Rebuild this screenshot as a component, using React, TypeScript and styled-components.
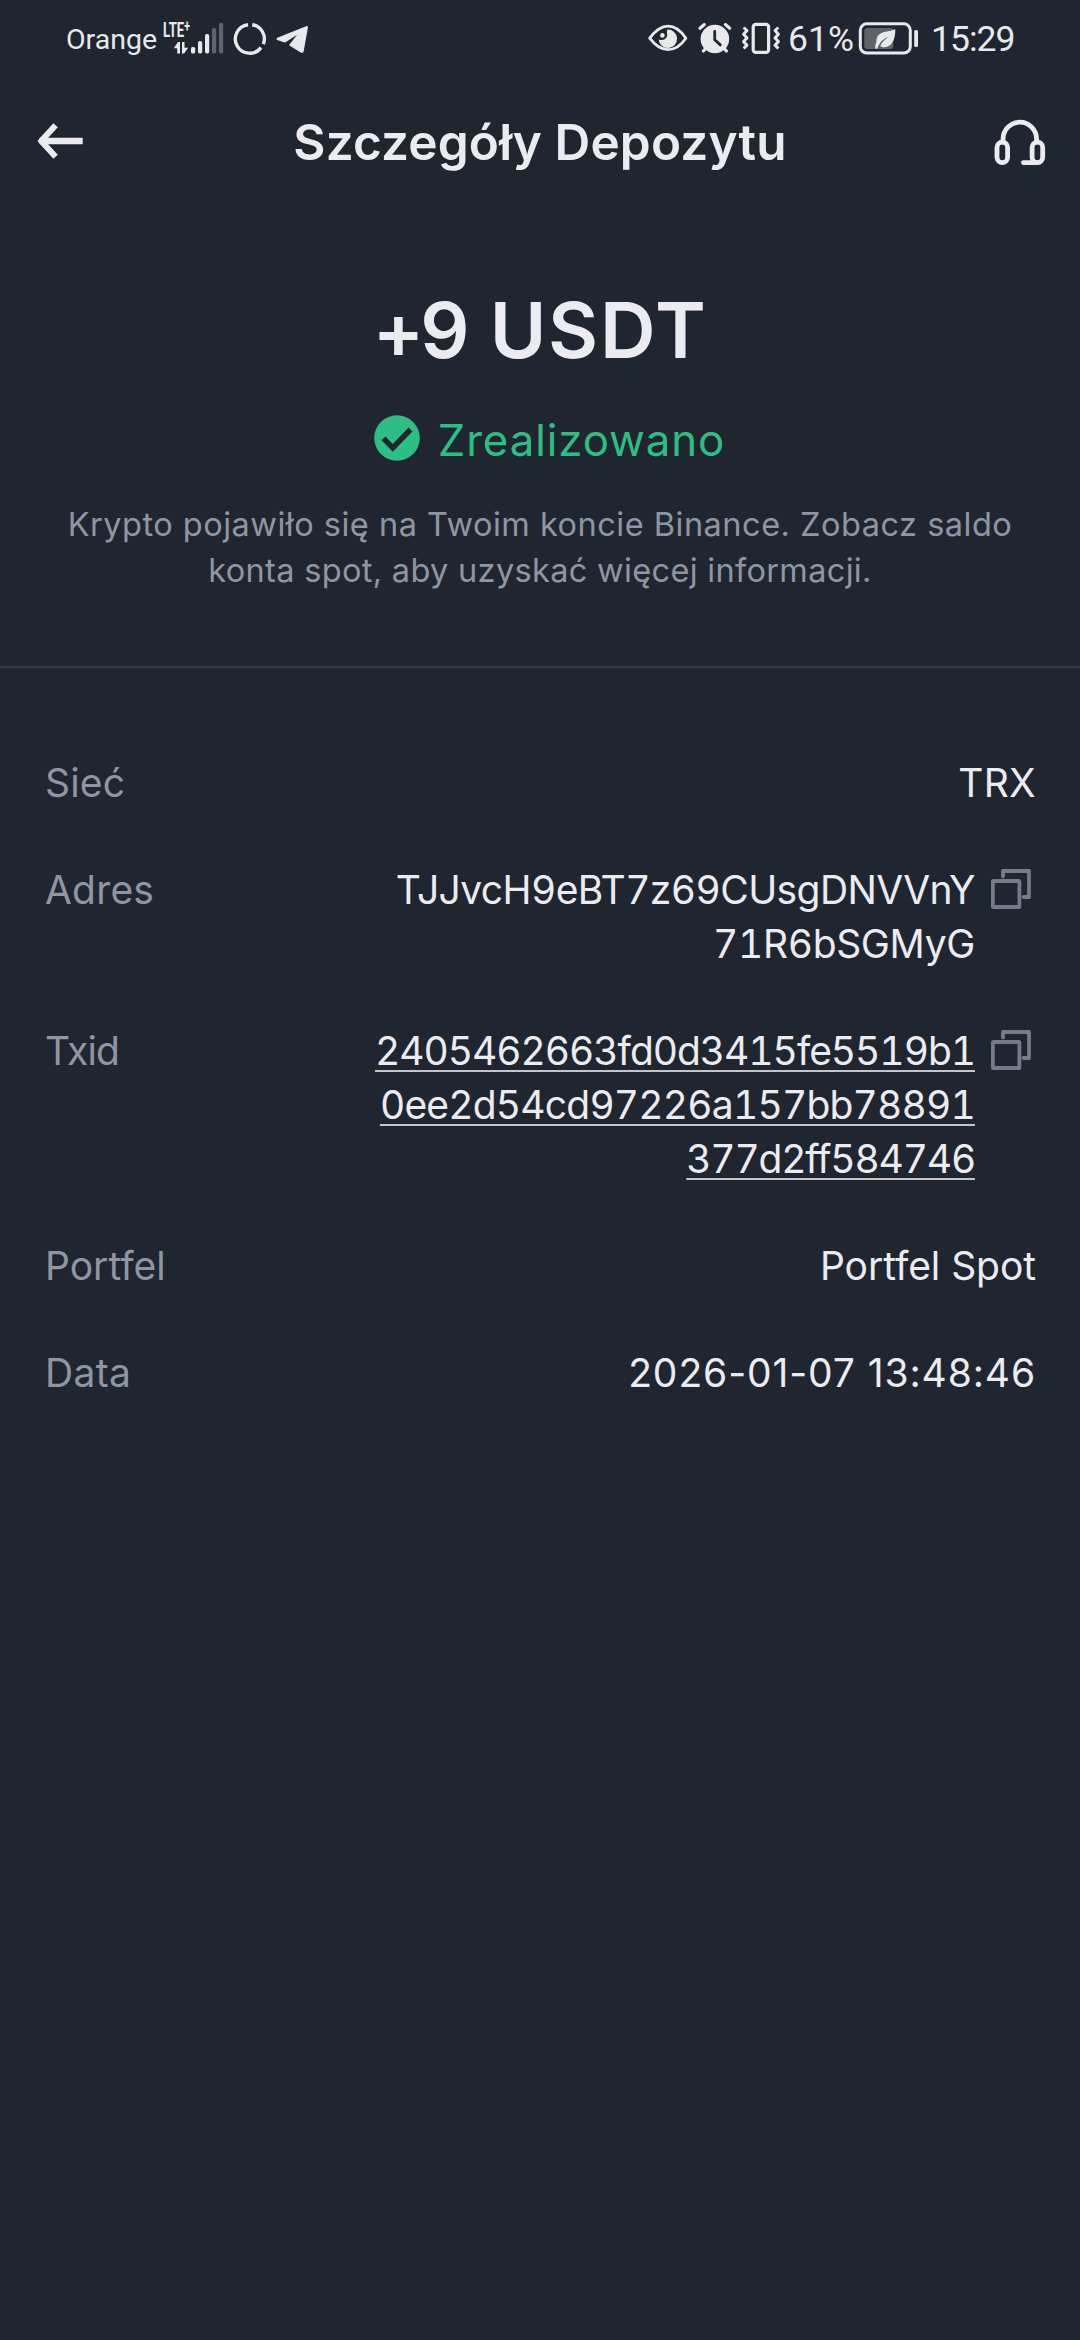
import React from 'react';
import styled, { createGlobalStyle } from 'styled-components';

const color = {
  bg: '#202630',
  text: '#ebecf0',
  muted: '#8f96a3',
  icon: '#737c8b',
  green: '#2ebd85',
  line: '#323843',
  status: '#e8e9eb',
  dim: '#5f646c',
};

const GlobalStyle = createGlobalStyle`
  html, body { margin: 0; background: ${color.bg}; }
  * { box-sizing: border-box; }
`;

const Screen = styled.main`
  display: flex;
  flex-direction: column;
  width: 1080px;
  min-height: 2340px;
  background: ${color.bg};
  color: ${color.text};
  font-family: Inter, 'Liberation Sans', sans-serif;
`;

const StatusBar = styled.div`
  display: flex;
  justify-content: space-between;
  align-items: center;
  height: 78px;
  padding: 0 65px 0 66px;
  color: ${color.status};
  font-family: Roboto, 'Liberation Sans', sans-serif;
`;

const StatusGroup = styled.div`
  display: flex;
  align-items: center;
`;

const StatusText = styled.span<{ $width: number; $size: number; $spacing?: number; $indent?: number }>`
  width: ${p => p.$width}px;
  padding-left: ${p => p.$indent ?? 0}px;
  font-size: ${p => p.$size}px;
  letter-spacing: ${p => p.$spacing ?? 0}px;
  white-space: nowrap;
`;

const Glyph = styled.svg<{ $gap?: number }>`
  display: block;
  flex: none;
  margin-left: ${p => p.$gap ?? 0}px;
  overflow: visible;
`;

const Header = styled.header`
  display: grid;
  grid-template-columns: 120px 1fr 120px;
  align-items: center;
  height: 126px;
`;

const Title = styled.h1`
  margin: 0;
  padding-top: 2px;
  font-size: 49.5px;
  font-weight: 600;
  line-height: 62px;
  letter-spacing: 0.15px;
  text-align: center;
  white-space: nowrap;
`;

const IconButton = styled.button<{ $end?: boolean }>`
  display: flex;
  justify-content: ${p => (p.$end ? 'flex-end' : 'flex-start')};
  padding: ${p => (p.$end ? '4px 34px 0 0' : '0 0 0 36px')};
  border: 0;
  background: none;
  color: inherit;
`;

const Summary = styled.section`
  display: flex;
  flex-direction: column;
  align-items: center;
  padding: 80px 40px 72px;
  border-bottom: 2px solid ${color.line};
`;

const Amount = styled.div`
  font-size: 77px;
  font-weight: 600;
  line-height: 92px;
  letter-spacing: 1.8px;
  word-spacing: 3px;
  white-space: nowrap;
`;

const Quantity = styled.span`
  letter-spacing: -4px;
`;

const State = styled.div`
  display: flex;
  align-items: center;
  gap: 18px;
  height: 60px;
  margin-top: 34px;
  padding-left: 19px;
  color: ${color.green};
  font-size: 43.8px;
  letter-spacing: 0.9px;
`;

const CheckIcon = styled.svg`
  display: block;
  margin-bottom: 4px;
`;

const Note = styled.p`
  margin: 32px 0 0;
  color: ${color.muted};
  font-size: 32.5px;
  line-height: 46px;
  text-align: center;
  white-space: nowrap;
`;

const Details = styled.dl`
  display: flex;
  flex-direction: column;
  gap: 53px;
  margin: 0;
  padding: 88px 44px 0 45px;
`;

const Row = styled.div`
  display: flex;
  align-items: flex-start;
  font-size: 39px;
  line-height: 54px;
`;

const Label = styled.dt<{ $spacing: number }>`
  flex: 1;
  color: ${color.muted};
  letter-spacing: ${p => p.$spacing}px;
`;

const Value = styled.dd<{ $link?: boolean; $tabular?: boolean }>`
  margin: 0;
  text-align: right;
  white-space: nowrap;
  font-feature-settings: ${p => (p.$tabular ? "'tnum'" : 'normal')};
  text-decoration: ${p => (p.$link ? 'underline' : 'none')};
  text-decoration-thickness: 2px;
  text-decoration-color: #c3c5ca;
  text-decoration-skip-ink: none;
  text-underline-offset: 5px;
`;

const Line = styled.span<{ $spacing: number }>`
  letter-spacing: ${p => p.$spacing}px;
`;

const CopyButton = styled.button`
  display: flex;
  padding: 6px 5px 0 16px;
  border: 0;
  background: none;
  color: ${color.icon};
`;

const SignalIcon = () => (
  <Glyph width="61" height="36" viewBox="163 20 61 36" fill="currentColor">
    <text transform="translate(163 36) scale(0.64 1)" fontSize="20.5" fontWeight="700">
      LTE<tspan dy="-5.500" fontSize="16.500">+</tspan>
    </text>
    <path d="M180 41v11.500h-2.800v-5.300h-3.400l4.200-6.200zM182 41h2.500v5.700h3.600l-4 5.800H182z" />
    <rect x="191" y="46" width="4.200" height="6.500" rx="1.600" />
    <rect x="198" y="40" width="4.200" height="12.500" rx="1.800" />
    <rect x="205" y="33" width="4.200" height="19.500" rx="1.800" />
    <rect x="212" y="27" width="4.200" height="25.500" rx="1.800" fill={color.dim} />
    <rect x="219" y="21.800" width="4.200" height="30.700" rx="1.800" fill={color.dim} />
  </Glyph>
);

const RingIcon = () => (
  <Glyph $gap={9} width="34" height="36" viewBox="233 20 34 36" fill="none" stroke="currentColor" strokeWidth="3.400">
    <path d="M252.200 23.700A14.300 14.300 0 0 1 263.300 43.200M261 46.600A14.300 14.300 0 1 1 248 23.700" />
  </Glyph>
);

const TelegramIcon = () => (
  <Glyph $gap={9} width="33" height="30" viewBox="276 24 33 30" fill="currentColor" stroke="currentColor" strokeWidth="1.200" strokeLinejoin="round">
    <path d="M307 26.500L277.500 38.400c-.4.200-.4.800 0 1l7.300 2.500L299.500 32.500L289.800 45l11.200 7c.9.500 1.900.2 2.100-.8L307.400 27z" />
  </Glyph>
);

const EyeIcon = () => (
  <Glyph width="42" height="36" viewBox="647 20 42 36" fill="none" stroke="currentColor" strokeWidth="2.800" strokeLinejoin="round">
    <path d="M649.700 37.200C655 30 661.500 25.200 668 25.200S681 30 685.900 37.200C681 44.400 674.500 48.600 668 48.600S655 44.400 649.700 37.200z" />
    <path d="M667.500 28.600a9.200 9.200 0 1 1-8.800 9.800c1 .6 2 .8 3.200.7a5.300 5.300 0 0 0 5.200-6.500c-.2-1.200-.5-2 .4-4z" fill="currentColor" stroke="none" />
    <circle cx="662.400" cy="34.400" r="2.300" fill="currentColor" stroke="none" />
  </Glyph>
);

const AlarmIcon = () => (
  <Glyph $gap={8} width="36" height="36" viewBox="697 20 36 36" fill="none" stroke="currentColor" strokeWidth="3.200" strokeLinecap="round">
    <circle cx="714.900" cy="38" r="14.300" fill="currentColor" stroke="none" />
    <path d="M700 27.200l4.300-3.600M729.700 27.200l-4.300-3.600M703.400 50l3-3.400M726.400 50l-3-3.400" />
    <path d="M714.700 30.500v8.200l5.600 5.200" stroke={color.bg} strokeWidth="2.800" />
  </Glyph>
);

const VibrateIcon = () => (
  <Glyph $gap={8} width="40" height="36" viewBox="741 20 40 36" fill="none" stroke="currentColor" strokeWidth="3.200" strokeLinejoin="round">
    <rect x="753.200" y="23.300" width="15.400" height="28" rx="2.600" />
    <path d="M743.600 26.500l3.400 3-3.400 3.700 3.400 3.700-3.400 3.700 3.400 3.600-3.400 3.300" strokeWidth="3" />
    <path d="M778.400 26.500l-3.400 3 3.400 3.700-3.400 3.700 3.400 3.700-3.400 3.600 3.400 3.300" strokeWidth="3" />
  </Glyph>
);

const BatteryIcon = () => (
  <Glyph $gap={3} width="62" height="36" viewBox="858 20 62 36" fill="none">
    <rect x="860.300" y="22.800" width="50" height="29.200" rx="6.500" stroke="currentColor" strokeWidth="3" />
    <rect x="864.300" y="27" width="29" height="21" rx="3" fill={color.dim} />
    <rect x="914.200" y="29" width="3.800" height="17" rx="1.600" fill="currentColor" />
    <path d="M895.200 28c.6 8-2.200 17.300-10.200 18.300-2 .2-3.600-.3-4.800-1.200 2-4 4.600-6.700 8.300-9.300-4.600 1.800-8.400 5-10.500 9.600l-.7 2.300h-2c-.3-3 .3-5 1.100-6.500-.5-6.500 3.700-9.400 9-10.400 3.900-.7 7-1 9.800-2.800z" fill="currentColor" />
  </Glyph>
);

const BackIcon = () => (
  <svg width="48" height="38" viewBox="36 122 48 38" fill="none" stroke="currentColor" strokeWidth="6.400">
    <path d="M55.600 125.300L41.200 141l14.400 15.700" strokeLinejoin="bevel" strokeWidth="6" />
    <path d="M41 141h41.700" />
    <path d="M37.500 141l4-4.400v8.800z" fill="currentColor" stroke="none" />
  </svg>
);

const SupportIcon = () => (
  <svg width="52" height="48" viewBox="994 119 52 48" fill="none" stroke="currentColor" strokeWidth="4.800" strokeLinecap="round">
    <path d="M1003 142v-2.800a16.800 17 0 0 1 33.600 0v2.800" />
    <rect x="997" y="142.200" width="10.600" height="20.400" rx="5.300" />
    <rect x="1032.100" y="142.200" width="10.600" height="20.400" rx="5.300" />
    <path d="M1023.400 162.600h14" />
  </svg>
);

const CopyIcon = () => (
  <svg width="40" height="40" viewBox="0 0 40 40" fill="none" stroke="currentColor" strokeWidth="3.800" strokeLinejoin="round" strokeLinecap="round">
    <rect x="1.900" y="12" width="26.500" height="26" rx="0.600" />
    <path d="M12 7.500V2h26v26h-5.500" />
  </svg>
);

type TextLine = { text: string; spacing: number };
type Item = { label: TextLine; lines: TextLine[]; link?: boolean; copy?: boolean; tabular?: boolean };

const items: Item[] = [
  { label: { text: 'Sieć', spacing: 0.2 }, lines: [{ text: 'TRX', spacing: 0.3 }] },
  {
    label: { text: 'Adres', spacing: 0.2 },
    lines: [{ text: 'TJJvcH9eBT7z69CUsgDNVVnY', spacing: -0.58 }, { text: '71R6bSGMyG', spacing: -0.35 }],
    copy: true,
    tabular: true,
  },
  {
    label: { text: 'Txid', spacing: -0.8 },
    lines: [
      { text: '2405462663fd0d3415fe5519b1', spacing: -1.03 },
      { text: '0ee2d54cd97226a157bb78891', spacing: -0.8 },
      { text: '377d2ff584746', spacing: -1.18 },
    ],
    link: true,
    copy: true,
    tabular: true,
  },
  { label: { text: 'Portfel', spacing: 0 }, lines: [{ text: 'Portfel Spot', spacing: -0.05 }] },
  { label: { text: 'Data', spacing: 0.3 }, lines: [{ text: '2026-01-07 13:48:46', spacing: 0.9 }] },
];

export default function App() {
  return (
    <Screen>
      <GlobalStyle />
      <StatusBar>
        <StatusGroup>
          <StatusText $width={97} $size={28.5}>Orange</StatusText>
          <SignalIcon />
          <RingIcon />
          <TelegramIcon />
        </StatusGroup>
        <StatusGroup>
          <EyeIcon />
          <AlarmIcon />
          <VibrateIcon />
          <StatusText $width={74} $size={35.5} $indent={7}>61%</StatusText>
          <BatteryIcon />
          <StatusText $width={95} $size={35.5} $indent={11} $spacing={-1}>15:29</StatusText>
        </StatusGroup>
      </StatusBar>
      <Header>
        <IconButton aria-label="Wstecz"><BackIcon /></IconButton>
        <Title>Szczegóły Depozytu</Title>
        <IconButton $end aria-label="Pomoc"><SupportIcon /></IconButton>
      </Header>
      <Summary>
        <Amount><Quantity>+9</Quantity> USDT</Amount>
        <State>
          <CheckIcon width="46" height="46" viewBox="0 0 46 46">
            <circle cx="23" cy="23" r="22.800" fill="currentColor" />
            <path d="M9.500 23.300l9.300 9.500L36.500 14.500" fill="none" stroke={color.bg} strokeWidth="5.400" />
          </CheckIcon>
          Zrealizowano
        </State>
        <Note>
          <Line $spacing={0.5}>Krypto pojawiło się na Twoim koncie Binance. Zobacz saldo</Line>
          <br />
          <Line $spacing={0.33}>konta spot, aby uzyskać więcej informacji.</Line>
        </Note>
      </Summary>
      <Details>
        {items.map(item => (
          <Row key={item.label.text}>
            <Label $spacing={item.label.spacing}>{item.label.text}</Label>
            <Value $link={item.link} $tabular={item.tabular}>
              {item.lines.map((line, i) => (
                <React.Fragment key={line.text}>
                  {i > 0 && <br />}
                  <Line $spacing={line.spacing}>{line.text}</Line>
                </React.Fragment>
              ))}
            </Value>
            {item.copy && <CopyButton aria-label="Kopiuj"><CopyIcon /></CopyButton>}
          </Row>
        ))}
      </Details>
    </Screen>
  );
}
